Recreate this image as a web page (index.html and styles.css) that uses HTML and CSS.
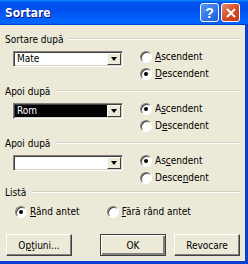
FILE: index.html
```html
<!DOCTYPE html>
<html lang="ro">

<head>
    <meta charset="UTF-8">
    <title>Sortare</title>
    <link rel="stylesheet" href="styles.css">
</head>

<body>

    <div class="window">
        <div class="titlebar">
            <span class="title">Sortare</span>
            <div class="caption">
                <span class="cbtn help">?</span>
                <span class="cbtn close">
                    <svg width="10" height="10" viewBox="0 0 10 10">
                        <path d="M1 1 L9 9 M9 1 L1 9" stroke="#fff" stroke-width="2" />
                    </svg>
                </span>
            </div>
        </div>

        <div class="client">

            <div class="group">
                <div class="legend"><span>Sortare după</span><i></i></div>
                <div class="body">
                    <div class="combo">
                        <span class="text">Mate</span>
                        <span class="arrow"><b></b></span>
                    </div>
                    <div class="radios">
                        <div class="row"><span class="radio"></span><span><u>A</u>scendent</span></div>
                        <div class="row"><span class="radio on"></span><span><u>D</u>escendent</span></div>
                    </div>
                </div>
            </div>

            <div class="group">
                <div class="legend"><span>Apoi după</span><i></i></div>
                <div class="body">
                    <div class="combo">
                        <span class="text sel">Rom</span>
                        <span class="arrow"><b></b></span>
                    </div>
                    <div class="radios">
                        <div class="row"><span class="radio on"></span><span>A<u>s</u>cendent</span></div>
                        <div class="row"><span class="radio"></span><span>D<u>e</u>scendent</span></div>
                    </div>
                </div>
            </div>

            <div class="group last">
                <div class="legend"><span>Apoi după</span><i></i></div>
                <div class="body">
                    <div class="combo">
                        <span class="text"></span>
                        <span class="arrow"><b></b></span>
                    </div>
                    <div class="radios">
                        <div class="row"><span class="radio on"></span><span>As<u>c</u>endent</span></div>
                        <div class="row"><span class="radio"></span><span>Desce<u>n</u>dent</span></div>
                    </div>
                </div>
            </div>

            <div class="list">
                <div class="legend"><span>Listă</span><i></i></div>
                <div class="list-row">
                    <div class="row"><span class="radio on"></span><span><u>R</u>ând antet</span></div>
                    <div class="row second"><span class="radio"></span><span><u>F</u>ără rând antet</span></div>
                </div>
            </div>

            <div class="buttons">
                <button class="btn">O<u>p</u>ţiuni...</button>
                <button class="btn default">OK</button>
                <button class="btn">Revocare</button>
            </div>

        </div>
    </div>

</body>

</html>
```

FILE: styles.css
```css
body {
    margin: 0;
    font-family: "DejaVu Sans Condensed", "DejaVu Sans", sans-serif;
    font-size: 10px;
    color: black;
}

.window {
    width: 248px;
    height: 264px;
    display: flex;
    flex-direction: column;
}

.titlebar {
    height: 25px;
    flex: none;
    display: flex;
    align-items: center;
    justify-content: space-between;
    padding: 0 8px 0 5px;
    background: linear-gradient(180deg, #0997ff, #0053ee 8%, #0050ee 40%, #0066ff 88%, #0066ff 93%, #005bff 95%, #003dd7 96%, #003dd7);
}

.title {
    color: white;
    font-family: "DejaVu Sans Condensed", "DejaVu Sans", sans-serif;
    font-weight: bold;
    font-size: 12px;
    text-shadow: 1px 1px #0f1089;
}

.caption {
    display: flex;
    gap: 2px;
}

.cbtn {
    width: 17px;
    height: 17px;
    border: 1px solid white;
    border-radius: 3px;
    display: flex;
    align-items: center;
    justify-content: center;
    color: white;
}

.help {
    background: linear-gradient(135deg, #4f95f8, #1e5fdc);
    font-family: "Liberation Sans", sans-serif;
    font-weight: bold;
    font-size: 14px;
}

.close {
    background: linear-gradient(135deg, #e88a6c, #d54a22 55%, #c23a16);
}

.client {
    flex: 1;
    background: #ece9d8;
    border-right: 3px solid #0840d6;
    border-bottom: 3px solid #0840d6;
    padding: 7px 5px 0 5px;
}

.legend {
    height: 14px;
    display: flex;
    align-items: center;
}

.legend i {
    flex: 1;
    margin-left: 6px;
    border-top: 1px solid #d0d0bf;
    border-bottom: 1px solid #fff;
}

.group {
    height: 52px;
}

.group.last {
    height: 49px;
}

.body {
    display: flex;
    padding-left: 8px;
}

.combo {
    width: 110px;
    height: 16px;
    margin-top: 5px;
    box-sizing: border-box;
    background: white;
    border: 1px solid;
    border-color: #808080 #fff #fff #808080;
    box-shadow: inset 1px 1px #404040, inset -1px -1px #d4d0c8;
    padding: 1px;
    display: flex;
}

.combo .text {
    flex: 1;
    padding-left: 2px;
    line-height: 12px;
}

.combo .sel {
    background: black;
    color: white;
}

.combo .arrow {
    width: 14px;
    box-sizing: border-box;
    background: #ece9d8;
    border: 1px solid;
    border-color: #fff #404040 #404040 #fff;
    display: flex;
    align-items: center;
    justify-content: center;
}

.combo .arrow b {
    border-top: 4px solid black;
    border-left: 3.5px solid transparent;
    border-right: 3.5px solid transparent;
}

.radios {
    margin-left: 17px;
    margin-top: 2px;
}

.row {
    height: 17px;
    display: flex;
    align-items: center;
}

.radio {
    width: 12px;
    height: 12px;
    box-sizing: border-box;
    border-radius: 50%;
    background: white;
    border: 1px solid;
    border-color: #808080 #fff #fff #808080;
    box-shadow: inset 1px 1px #404040;
    margin-right: 3px;
    display: flex;
    align-items: center;
    justify-content: center;
}

.radio.on::after {
    content: "";
    width: 4px;
    height: 4px;
    border-radius: 50%;
    background: black;
}

.list-row {
    display: flex;
    padding-left: 10px;
    margin-top: 4px;
}

.list-row .second {
    margin-left: 27px;
}

.buttons {
    display: flex;
    gap: 8px;
    margin-top: 14px;
    padding-left: 1px;
}

.btn {
    width: 66px;
    height: 22px;
    font: inherit;
    color: black;
    background: #ece9d8;
    border: 1px solid;
    border-color: #fff #404040 #404040 #fff;
    box-shadow: inset -1px -1px #808080;
    padding: 0;
}

.btn.default {
    margin-left: auto;
    border-color: #404040;
    box-shadow: inset 1px 1px #fff, inset -2px -2px #808080;
}
```
